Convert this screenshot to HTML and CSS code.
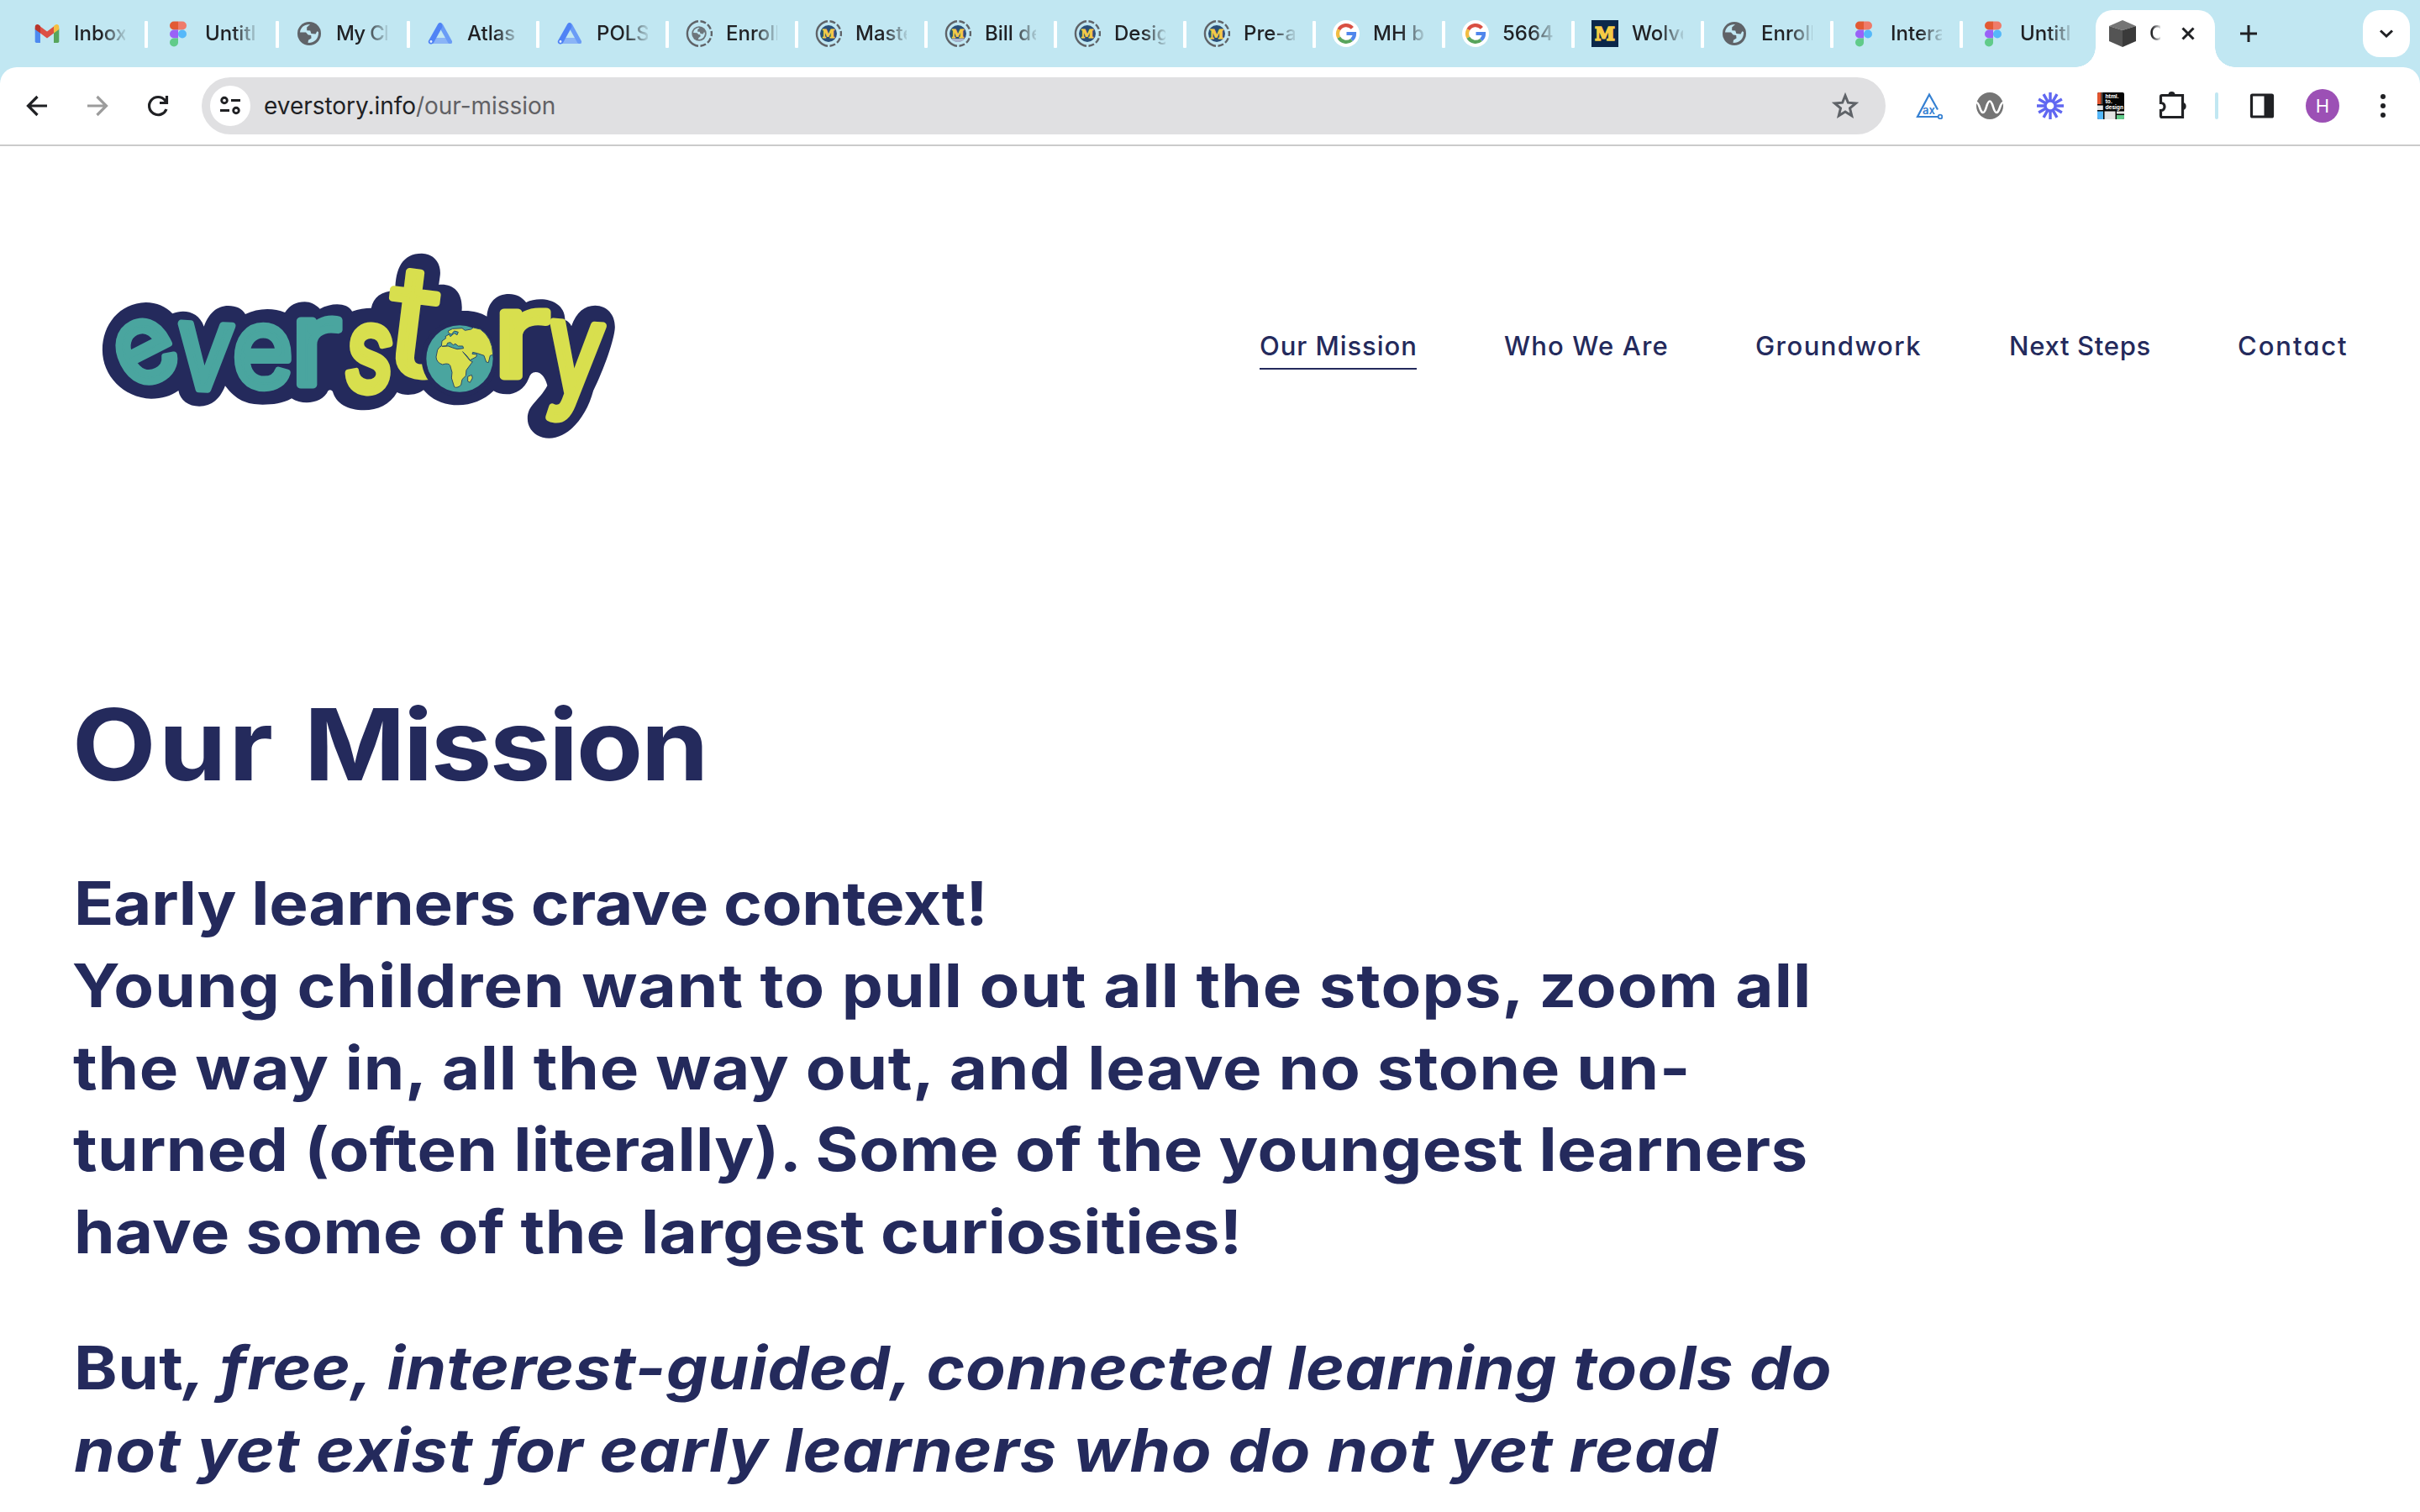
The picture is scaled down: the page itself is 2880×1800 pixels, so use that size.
FILE: index.html
```html
<!DOCTYPE html>
<html lang="en">
<head>
<meta charset="utf-8">
<title>Our Mission</title>
<link rel="stylesheet" href="styles.css">
</head>
<body>
<svg class="defs" aria-hidden="true">
  <symbol id="gmail" viewBox="0 0 32 32">
    <path fill="#4e8af0" d="M1.7 10v15.3q0 1.7 1.7 1.7H8V14.5z"/>
    <path fill="#58a55c" d="M30.300 10v15.300q0 1.700-1.700 1.700H24V14.500z"/>
    <path fill="#dc5044" d="M8 7.600l8 6 8-6v8l-8 6-8-6z"/>
    <path fill="#b8352b" d="M1.700 11V8.300C1.700 5.200 4.700 4.200 6.800 6L8 7v8.600z"/>
    <path fill="#f5bf42" d="M30.300 11V8.300c0-3.100-3-4.100-5.100-2.300L24 7v8.600z"/>
  </symbol>
  <symbol id="figma" viewBox="0 0 32 32">
    <path fill="#e25a34" d="M16 1.500h-5a5 5 0 0 0 0 10h5z"/>
    <path fill="#ef7b6a" d="M16 1.500h5a5 5 0 0 1 0 10h-5z"/>
    <path fill="#9a62f7" d="M16 11.500h-5a5 5 0 0 0 0 10h5z"/>
    <circle fill="#55b8fa" cx="21" cy="16.500" r="5"/>
    <path fill="#61cb8a" d="M16 21.500h-5a5 5 0 1 0 5 5z"/>
  </symbol>
  <symbol id="globe" viewBox="0 0 32 32">
    <circle cx="16" cy="16" r="14" fill="#5f6368"/>
    <path fill="#c1e7f2" d="M5 14.500C5.500 8.500 10.500 4.700 17 4.900L13.200 8.500v3.800l4 .2 1.200 3.500 5.200.6 1.700-3.300 1.700.7C27.500 21 23 27 15 27l-.5-.2.500-3 3.500-2.300-.3-3.500-3.500-.4-2.700-3z"/>
  </symbol>
  <symbol id="atlas" viewBox="0 0 32 32">
    <path fill="#8ab4f6" d="M6 21h20l4 7H2.500z"/>
    <path fill="#6a9cf6" d="M13 5q3-4 6 0l11 20c1 2.500-3 4.500-5 1.500z"/>
    <path fill="#4f83f5" d="M13 5q3-4 5 0l.5 3L8 27c-2.500 3-7.500 1-6-2.500z"/>
    <circle cx="5" cy="25.500" r="1.400" fill="#e8f1ff"/>
  </symbol>
  <symbol id="ring" viewBox="0 0 32 32">
    <g fill="none" stroke="#5f6368" stroke-width="2.400">
      <path d="M15 1.300A14.800 14.800 0 0 0 15 30.700"/>
      <path d="M17.500 1.300a14.800 14.800 0 0 1 6.500 2.200M26 5.100a14.800 14.800 0 0 1 3.700 5.500M30.600 13a14.800 14.800 0 0 1 0 6M29.700 21.400a14.800 14.800 0 0 1-3.700 5.500M24 28.500a14.800 14.800 0 0 1-6.500 2.200"/>
    </g>
  </symbol>
  <symbol id="google" viewBox="0 0 32 32">
    <circle cx="16" cy="16" r="16" fill="#fff"/>
    <g fill="none" stroke-width="4.200">
      <path stroke="#d94f42" d="M23.400 9.300A10 10 0 0 0 7.300 11.200"/>
      <path stroke="#f2bd42" d="M7.300 11.200a10 10 0 0 0 0 9.600"/>
      <path stroke="#58a55c" d="M7.300 20.800a10 10 0 0 0 15.300 2.700"/>
      <path stroke="#5086ec" d="M22.600 23.500A10 10 0 0 0 26 16h-9.500"/>
    </g>
  </symbol>
  <symbol id="cube" viewBox="0 0 32 32">
    <path fill="#757575" d="M16 0l16 7-16 5L0 7z"/>
    <path fill="#545454" d="M0 7l16 5v20L0 25z"/>
    <path fill="#3a3a3a" d="M32 7l-16 5v20l16-7z"/>
  </symbol>
</svg>

<header class="browser">
  <div class="tabs">
    <div class="tab wide"><svg class="fav"><use href="#gmail"/></svg><span class="label">Inbox</span></div>
    <div class="tab wide"><svg class="fav"><use href="#figma"/></svg><span class="label">Untitl</span></div>
    <div class="tab wide"><svg class="fav"><use href="#globe"/></svg><span class="label tight">My Cl</span></div>
    <div class="tab"><svg class="fav"><use href="#atlas"/></svg><span class="label">Atlas</span></div>
    <div class="tab"><svg class="fav"><use href="#atlas"/></svg><span class="label">POLS</span></div>
    <div class="tab"><svg class="fav" viewBox="0 0 32 32"><use href="#ring"/><use href="#globe" x="6" y="6" width="20" height="20" opacity=".85"/></svg><span class="label">Enroll</span></div>
    <div class="tab"><svg class="fav" viewBox="0 0 32 32"><use href="#ring"/><circle cx="16" cy="16" r="10" fill="#2b5078"/><text class="slab" x="16" y="21" font-size="13.500">M</text></svg><span class="label">Maste</span></div>
    <div class="tab"><svg class="fav" viewBox="0 0 32 32"><use href="#ring"/><circle cx="16" cy="16" r="10" fill="#2b5078"/><path fill="#a9b4cc" d="M8 22h16q-3 4-8 4t-8-4z"/><text class="slab" x="16" y="20.500" font-size="13.500">M</text></svg><span class="label">Bill de</span></div>
    <div class="tab"><svg class="fav" viewBox="0 0 32 32"><use href="#ring"/><circle cx="16" cy="16" r="10" fill="#2b5078"/><text class="slab" x="16" y="21" font-size="13.500">M</text></svg><span class="label">Desig</span></div>
    <div class="tab"><svg class="fav" viewBox="0 0 32 32"><use href="#ring"/><circle cx="16" cy="16" r="10" fill="#2b5078"/><text class="slab" x="16" y="21.500" font-size="15">M</text></svg><span class="label">Pre-a</span></div>
    <div class="tab"><svg class="fav"><use href="#google"/></svg><span class="label">MH b</span></div>
    <div class="tab"><svg class="fav"><use href="#google"/></svg><span class="label">5664</span></div>
    <div class="tab"><svg class="fav" viewBox="0 0 32 32"><path fill="#0b274a" d="M0 0h32v32H0z"/><text class="slab big" x="16" y="24" font-size="21.500">M</text></svg><span class="label">Wolve</span></div>
    <div class="tab"><svg class="fav"><use href="#globe"/></svg><span class="label">Enroll</span></div>
    <div class="tab"><svg class="fav"><use href="#figma"/></svg><span class="label">Intera</span></div>
    <div class="tab last"><svg class="fav"><use href="#figma"/></svg><span class="label">Untitl</span></div>
    <div class="tab-active">
      <svg class="fav"><use href="#cube"/></svg><span class="label short">O</span>
      <svg class="close" viewBox="0 0 16 16"><path d="M1.500 1.500l13 13M14.500 1.500l-13 13"/></svg>
    </div>
    <svg class="plus" viewBox="0 0 20 20"><path d="M10 0v20M0 10h20"/></svg>
    <div class="tab-search"><svg viewBox="0 0 16 10"><path d="M1 1.500l7 6.500 7-6.500"/></svg></div>
  </div>

  <div class="toolbar">
    <svg class="tool" viewBox="0 0 32 32"><path class="ink" d="M28 16H6M16.500 5L5.500 16l11 11"/></svg>
    <svg class="tool" viewBox="0 0 32 32"><path class="ink faded" d="M4 16h22M15.500 5l11 11-11 11"/></svg>
    <svg class="tool" viewBox="0 0 32 32"><path class="ink" d="M26 20A10.600 10.600 0 1 1 24.200 9.200L26 11.500M26.500 4v8.500H18"/></svg>
    <div class="address">
      <div class="site"><svg viewBox="0 0 24 24"><path d="M13 5.500h11M0 17.500h11"/><circle cx="5" cy="5.500" r="3.300"/><circle cx="19" cy="17.500" r="3.300"/></svg></div>
      <span class="url">everstory.info<span>/our-mission</span></span>
      <svg class="star" viewBox="0 0 32 32"><path d="M16 3.800l3.400 8.400 9.100.7-7 5.900 2.200 8.900L16 22.900l-7.700 4.800 2.200-8.900-7-5.900 9.100-.7z"/></svg>
    </div>
    <div class="extensions">
      <svg viewBox="0 0 32 32"><path fill="none" stroke="#3580d2" stroke-width="2.200" d="M26 20.500L16 2.500 2 29h24"/><circle cx="29" cy="29" r="2.300" fill="#fff" stroke="#3580d2" stroke-width="1.800"/><text class="ax" x="15.500" y="25.500">ax</text></svg>
      <svg viewBox="0 0 32 32"><circle cx="16" cy="16" r="16" fill="#757575"/><path fill="none" stroke="#fff" stroke-width="2.600" d="M0 12c4 0 4 12 8 12s4-13.500 8-13.500S20 24 24 24s4-12 8-12"/></svg>
      <svg viewBox="-16 -16 32 32"><g stroke="#6067f1" stroke-width="3.400" fill="none"><circle r="6"/><path d="M0-6v-10M0 6v10M-6 0h-10M6 0h10"/><path transform="rotate(30)" d="M0-6v-10M0 6v10M-6 0h-10M6 0h10"/><path transform="rotate(60)" d="M0-6v-10M0 6v10M-6 0h-10M6 0h10"/></g></svg>
      <svg viewBox="0 0 32 32"><path d="M0 2q0-2 2-2h28q2 0 2 2v28q0 2-2 2H2q-2 0-2-2z" fill="#050505"/><path fill="#e1552f" d="M0 2q0-2 2-2h2.500v14H0z"/><path fill="#5d5d5d" d="M5 0h1.200v14H5z"/><path fill="#e3e3e3" d="M0 15.500h6.800V21H0zM8.500 22.500H21.500V32H8.500zM23 22.500h9v3h-9z"/><path fill="#55b8fa" d="M0 22.500h7V32H2q-2 0-2-2z"/><path fill="#61cb8a" d="M23 27h9v3q0 2-2 2h-7z"/><text class="h2d" x="9.500" y="7">html.</text><text class="h2d" x="9.500" y="13">to.</text><text class="h2d" x="9.500" y="19.700">design</text></svg>
      <svg class="puzzle" viewBox="0 0 34 34"><path class="ink" d="M4 5.500h24.500v26H4q-1.500 0-1.500-1.500v-6.500c6 0 6-9 0-9V7q0-1.500 1.500-1.500z"/><path fill="#202124" d="M11.500 5a4 4 0 0 1 8 0zM29 14a4.600 4.600 0 0 1 0 9z"/></svg>
      <span class="split"></span>
      <svg class="panel" viewBox="0 0 30 32"><path class="ink" d="M3.500 3h23q1 0 1 1v24q0 1-1 1h-23q-1 0-1-1V4q0-1 1-1z"/><path fill="#202124" d="M17.500 3H27v26h-9.500z"/></svg>
      <div class="avatar">H</div>
      <svg class="dots" viewBox="0 0 8 32"><circle cx="4" cy="5" r="3"/><circle cx="4" cy="16" r="3"/><circle cx="4" cy="27" r="3"/></svg>
    </div>
  </div>
</header>

<main class="page">
  <div class="masthead">
    <svg class="logo" viewBox="0 0 660 260" role="img" aria-label="everstory">
      <path class="backing" transform="scale(.42092 .33333)" d="M52 410C52 320 100 242 175 240C205 240 232 255 250 280C285 262 325 275 339 326C352 280 375 252 408 252C430 252 448 262 456 282C490 260 535 258 568 276C582 250 600 238 624 238C640 238 655 248 667 263C700 240 745 240 758 272C775 264 795 260 812 260C818 222 840 200 880 197C880 120 900 65 955 65C995 67 1012 110 1006 150L1003 177C1045 172 1072 205 1068 270C1095 268 1120 275 1139 290C1142 240 1165 210 1202 210C1222 210 1238 220 1250 240C1290 215 1360 230 1360 303Q1372 308 1378 325C1392 275 1415 251 1445 251C1480 252 1502 285 1501 330C1500 370 1470 480 1440 555C1420 650 1370 725 1315 725C1280 725 1254 695 1254 655C1254 605 1285 595 1310 537Q1300 490 1277 489Q1262 490 1257 512C1245 550 1220 568 1195 568Q1172 568 1158 556C1130 590 1095 607 1058 607C1020 607 985 590 960 553C940 573 905 575 885 561C865 605 830 625 792 625C745 625 712 600 703 558Q697 548 690 556C675 600 620 610 587 583C560 602 535 605 505 605C460 605 430 590 399 538C385 585 360 611 326 611C295 611 272 590 267 555C245 575 220 584 190 584C110 580 52 500 52 410Z"/>
      <g class="word teal">
        <text transform="translate(73.500 139) rotate(-27) scale(1.220 1.300) translate(-29.500 27)">e</text>
        <text transform="translate(145 144.500) rotate(3) scale(1.200 1.400) translate(-29 27.500)">v</text>
        <text transform="translate(213 145) scale(1.240 1.300) translate(-29.500 27)">e</text>
        <text transform="translate(281 139.500) scale(1.600 1.400) translate(-22 27.500)">r</text>
      </g>
      <g class="word lime">
        <text transform="translate(340.500 147.500) rotate(6) scale(1.100 1.400) translate(-27.500 27)">s</text>
        <text class="thin" transform="translate(396 106) rotate(7) scale(2 1.800) translate(-17 33.500)">t</text>
        <text transform="translate(526 130) scale(1.780 1.390) translate(-22 27.500)">r</text>
        <text transform="translate(584 163) rotate(5) scale(1.180 1.520) translate(-29 17)">y</text>
      </g>
      <g transform="translate(400 90) scale(.33333)">
        <circle cx="141" cy="171" r="136" fill="#242a5c"/>
        <circle cx="141" cy="171" r="119" fill="#4aa59f"/>
        <path class="land" d="M78 108L92 98L90 92L103 84L108 92L122 80L132 86L136 76L122 72L112 84L102 80L100 72L116 64L150 62L160 70L182 66L190 60L215 66Q258 95 260 157L250 160L244 185L236 183L228 160L205 152L188 148L186 154L203 156L200 165L178 176L166 160L152 146L178 178L187 182L165 212L163 232L150 245L146 265Q132 278 122 272L112 240L114 220L107 195Q100 185 80 192Q58 185 57 165L62 140Q68 128 76 126Z"/>
        <path class="land" d="M170 235L184 229L187 240L178 256L170 252Z"/>
        <path class="sea" d="M78 127L94 125L98 115L108 113L118 122L126 118L136 126L152 126L155 134L132 137L116 132L100 126Z"/>
      </g>
    </svg>
    <nav class="nav">
      <a class="n1 current">Our Mission</a>
      <a class="n2">Who We Are</a>
      <a class="n3">Groundwork</a>
      <a class="n4">Next Steps</a>
      <a class="n5">Contact</a>
    </nav>
  </div>

  <article class="copy">
    <h1><span class="lead">Our </span>Mission</h1>
    <h2>
      <span class="line l1">Early learners crave context!</span>
      <span class="line l2">Young children want to pull out all the stops, zoom all</span>
      <span class="line l3">the way in, all the way out, and leave no stone un-</span>
      <span class="line l4">turned (often literally). Some of the youngest learners</span>
      <span class="line l5">have some of the largest curiosities!</span>
    </h2>
    <h2>
      <span class="line l6">But<em>, free, interest-guided, connected learning tools do</em></span>
      <span class="line l7"><em>not yet exist for early learners who do not yet read</em></span>
    </h2>
  </article>
</main>
</body>
</html>
```
FILE: styles.css
```css
* { box-sizing: border-box; }

body {
  margin: 0;
  height: 1800px;
  overflow: hidden;
  background: #fff;
  color: #242a5c;
  font-family: Inter, "Noto Sans", sans-serif;
}

.defs { position: absolute; width: 0; height: 0; }
svg { display: block; flex: none; }

/* browser chrome */
.browser { background: #c1e7f2; color: #202124; }

.tabs { display: flex; height: 80px; padding-left: 20px; }

.tab {
  display: flex;
  align-items: center;
  width: 154px;
  padding-left: 20px;
}
.tab.wide { width: 156px; }
.tab.last { width: 158px; }
.tab::after {
  content: "";
  width: 4px;
  height: 32px;
  margin: 2px 0 0 auto;
  border-radius: 1px;
  background: #fff;
}
.tab.last::after { display: none; }

.fav { width: 32px; height: 32px; }

.label {
  width: 61px;
  margin-left: 16px;
  overflow: hidden;
  white-space: nowrap;
  font-size: 24px;
  font-weight: 500;
  line-height: 32px;
  -webkit-mask-image: linear-gradient(90deg, #000 55%, transparent 106%);
  mask-image: linear-gradient(90deg, #000 55%, transparent 106%);
}
.label.tight { letter-spacing: -.700px; }
.label.short {
  width: 13px;
  -webkit-mask-image: linear-gradient(90deg, #000 20%, transparent 115%);
  mask-image: linear-gradient(90deg, #000 20%, transparent 115%);
}

.slab {
  fill: #f5cb45;
  stroke: #f5cb45;
  stroke-width: .800;
  font-family: "DejaVu Serif", serif;
  font-weight: 700;
  text-anchor: middle;
}
.slab.big { stroke-width: 1.600; }

.tab-active {
  position: relative;
  display: flex;
  align-items: center;
  width: 142px;
  height: 68px;
  margin-top: 12px;
  padding: 0 0 12px 16px;
  border-radius: 20px 20px 0 0;
  background: #fff;
}
.tab-active::before,
.tab-active::after {
  content: "";
  position: absolute;
  bottom: 0;
  width: 24px;
  height: 24px;
}
.tab-active::before { left: -24px; background: radial-gradient(circle at 0 0, transparent 23.500px, #fff 24px); }
.tab-active::after { right: -24px; background: radial-gradient(circle at 100% 0, transparent 23.500px, #fff 24px); }

.close { width: 16px; height: 16px; margin-left: 25px; }
.close path, .plus path, .tab-search path { fill: none; stroke: #202124; stroke-width: 3; }
.plus { width: 20px; height: 20px; margin: 30px 0 0 30px; }

.tab-search {
  display: flex;
  align-items: center;
  justify-content: center;
  width: 56px;
  height: 56px;
  margin: 12px 12px 0 auto;
  border-radius: 20px;
  background: #fff;
}
.tab-search svg { width: 16px; height: 10px; }

.toolbar {
  display: flex;
  align-items: center;
  height: 94px;
  padding-left: 28px;
  border-bottom: 2px solid #cbcbcb;
  border-radius: 20px 20px 0 0;
  background: #fff;
}
.tool { width: 32px; height: 32px; margin-right: 40px; }
.tool:nth-child(3) { margin-right: 36px; }
.ink { fill: none; stroke: #202124; stroke-width: 3.200; }
.ink.faded { stroke: #9c9c9c; }

.address {
  display: flex;
  flex: none;
  align-items: center;
  width: 2004px;
  height: 68px;
  padding: 0 32px 0 10px;
  border-radius: 34px;
  background: #e0e0e2;
}
.site {
  display: flex;
  align-items: center;
  justify-content: center;
  width: 48px;
  height: 48px;
  border-radius: 50%;
  background: #fff;
}
.site svg { width: 24px; height: 24px; overflow: visible; fill: none; stroke: #202124; stroke-width: 2.900; }
.url { margin-left: 16px; font-size: 28px; line-height: 36px; letter-spacing: -.040px; }
.url span { color: #616165; }
.star { width: 32px; height: 32px; margin-left: auto; fill: none; stroke: #5f6368; stroke-width: 3; }

.extensions { display: flex; flex: none; align-items: center; margin-left: 36px; gap: 40px; }
.extensions svg { width: 32px; height: 32px; }
.ax { fill: #3580d2; font-size: 13px; font-weight: 600; text-anchor: middle; }
.h2d { fill: #fff; font-size: 6.500px; font-weight: 700; }
.extensions .puzzle { width: 34px; height: 34px; margin: -2px 0 0 1px; }
.split { width: 4px; height: 32px; margin-left: -7px; border-radius: 2px; background: #c1e7f2; }
.extensions .panel { width: 30px; margin: 0 2px 0 -3px; }
.avatar {
  width: 40px;
  height: 40px;
  margin-left: -5px;
  border-radius: 50%;
  background: #9c50b5;
  color: #fff;
  font-size: 22px;
  line-height: 41px;
  text-align: center;
}
.extensions .dots { width: 8px; margin-left: 8px; fill: #202124; }

/* site */
.page { padding: 0 86px 0 88px; }

.masthead { display: flex; align-items: flex-start; padding-top: 106px; height: 640px; }
.logo { width: 660px; height: 260px; margin-left: 12px; }
.backing { fill: #242a5c; }
.word {
  font-size: 100px;
  font-weight: 400;
  stroke-width: 6.500;
  stroke-linejoin: round;
}
.word .thin { font-weight: 300; stroke-width: 4.500; }
.teal { fill: #4aa59f; stroke: #4aa59f; }
.lime { fill: #d8df4e; stroke: #d8df4e; }
.land { fill: #d8df4e; stroke: #2b4a68; stroke-width: 3; stroke-linejoin: round; }
.sea { fill: #4aa59f; stroke: #2b4a68; stroke-width: 3; }

.nav { display: flex; gap: 104px; margin: 107px 0 0 auto; }
.nav a {
  height: 53px;
  white-space: nowrap;
  font-size: 31px;
  font-weight: 500;
  line-height: 50px;
  font-feature-settings: "cv11";
}
.nav .current { border-bottom: 2px solid #242a5c; }
.n1 { width: 187px; letter-spacing: .950px; }
.n2 { width: 195px; letter-spacing: 1.150px; }
.n3 { width: 198px; letter-spacing: 1.450px; }
.n4 { width: 168px; letter-spacing: .700px; }
.n5 { width: 131px; letter-spacing: 1.950px; }

.copy { width: 2400px; transform: scaleX(1.1); transform-origin: 0 0; }
h1 {
  margin: 0 0 69px -2px;
  font-size: 118px;
  font-weight: 700;
  line-height: 144px;
  letter-spacing: -2.300px;
}
.lead { letter-spacing: 2.600px; }
h2 {
  margin: 0 0 64px;
  font-size: 71px;
  font-weight: 700;
  line-height: 97.800px;
}
.line { display: block; white-space: nowrap; }
em { font-feature-settings: "cv11"; }
.l1 { letter-spacing: -.290px; }
.l2 { letter-spacing: .920px; margin-left: -2px; }
.l3 { letter-spacing: .660px; margin-left: -1px; }
.l4 { letter-spacing: .360px; margin-left: -1px; }
.l5 { letter-spacing: .220px; }
.l6 { letter-spacing: .450px; }
.l7 { letter-spacing: .630px; }
```
